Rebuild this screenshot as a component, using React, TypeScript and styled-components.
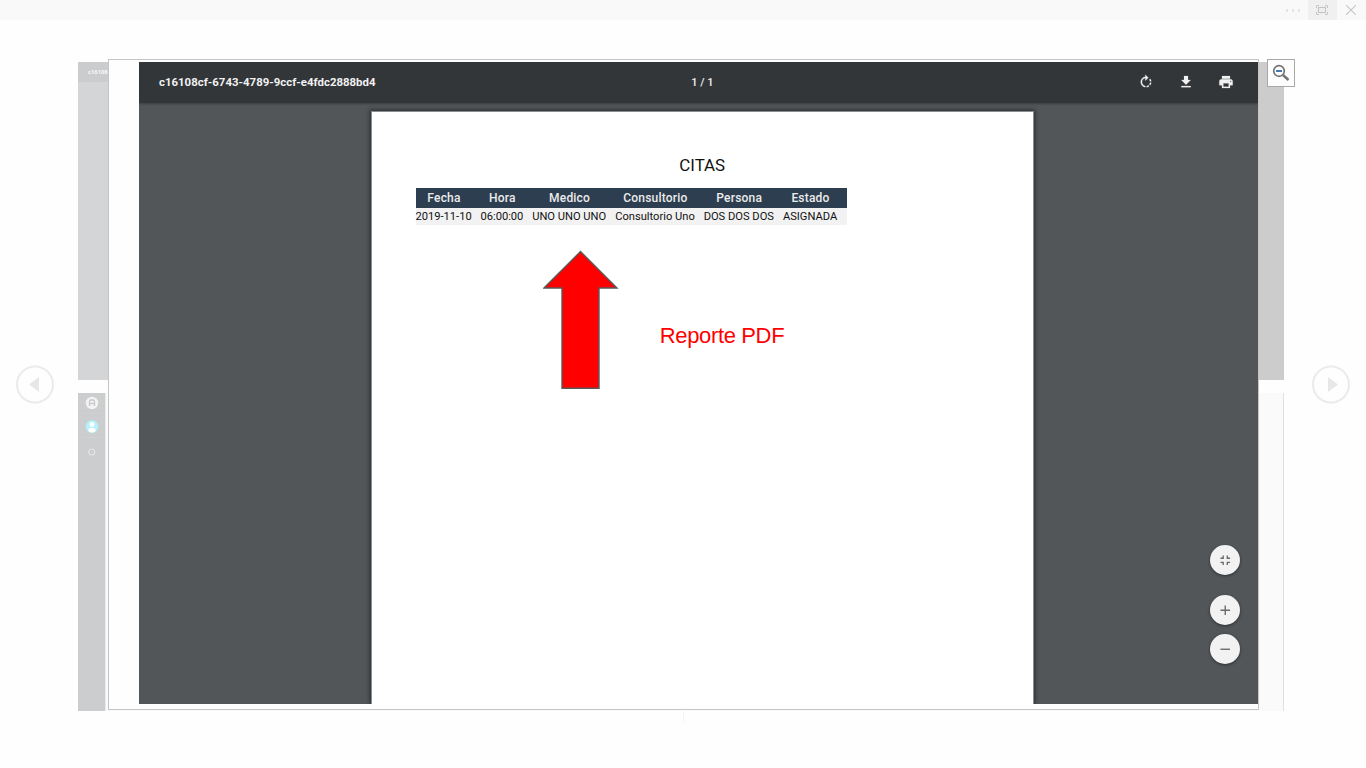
import React from 'react';
import styled, { createGlobalStyle } from 'styled-components';

const GlobalStyle = createGlobalStyle`
  * { box-sizing: border-box; }
  html, body { margin: 0; padding: 0; }
  body { background: #fefefe; overflow: hidden; font-family: Roboto, sans-serif; }
  svg { display: block; }
`;

const Viewer = styled.div`
  width: 1366px;
  height: 768px;
  display: flex;
  flex-direction: column;
  background: #fefefe;
`;

const WindowBar = styled.header`
  height: 20px;
  flex: none;
  display: flex;
  justify-content: flex-end;
  background: #f9f9f9;
`;

const WindowButton = styled.div<{ $active?: boolean }>`
  width: 29px;
  height: 20px;
  display: flex;
  align-items: center;
  justify-content: center;
  padding: 0 1px 0 0;
  background: ${(p) => (p.$active ? '#f0f0f0' : 'transparent')};
`;

const Stage = styled.main`
  flex: 1;
  display: flex;
  justify-content: space-between;
  padding: 0 16px;
`;

const NavButton = styled.button`
  width: 38px;
  height: 39px;
  margin-top: 345px;
  padding: 0;
  border: 0;
  background: none;
`;

const Book = styled.div`
  position: relative;
  width: 1206px;
  margin: 42px 4px 0 0;
  display: flex;
  flex-direction: column;
  gap: 13px;
`;

const FadedPage = styled.div`
  height: 318px;
  background: linear-gradient(90deg, #d4d5d7 0 50%, #cccccc 50%);
`;

const FadedToolbar = styled.div`
  width: 31px;
  height: 20px;
  padding-left: 10px;
  background: #cbccce;
  color: #fafafa;
  font: 700 5.8px/20px Roboto, sans-serif;
`;

const FadedApp = styled.div`
  height: 318px;
  display: flex;
  background: #fafafa;
  border-right: 1px solid #e0e0e0;
`;

const FadedSidebar = styled.div`
  width: 28px;
  padding: 3px 0 0 7px;
  display: flex;
  flex-direction: column;
  background: #cccdcf;
  border-right: 1px solid #e9e9ea;
`;

const FadedDivider = styled.div`
  width: 22px;
  height: 1px;
  margin: 3px 0 4px -3px;
  background: #cfd0d2;
`;

const Spine = styled.div`
  width: 1px;
  height: 12px;
  margin: -13px 0 0 605px;
  background: #f4f4f4;
`;

const ZoomedFrame = styled.section`
  position: absolute;
  left: 30px;
  top: -3px;
  width: 1151px;
  height: 651px;
  padding: 2px 0 5px 30px;
  border: 1px solid #c5c5c5;
  background: #fefefe;
`;

const ZoomOutButton = styled.button`
  position: absolute;
  left: 1189px;
  top: -3px;
  width: 28px;
  height: 28px;
  padding: 0;
  border: 1px solid #a8a8a8;
  background: #fdfdfd;
`;

const Pdf = styled.div`
  position: relative;
  width: 1119px;
  height: 642px;
  display: flex;
  flex-direction: column;
  background: #525659;
  overflow: hidden;
`;

const PdfToolbar = styled.div`
  flex: none;
  height: 41px;
  display: grid;
  grid-template-columns: 1fr auto 1fr;
  align-items: center;
  padding: 0 24px 2px 20px;
  background: #323639;
  color: #f1f1f1;
  font: 700 11.4px/38px Roboto, sans-serif;
  box-shadow: 0 1px 2px rgba(0, 0, 0, 0.3);
  z-index: 1;
`;

const PdfTitle = styled.span`
  letter-spacing: 0.02px;
`;

const PageCount = styled.span`
  padding: 2px 0 0 12px;
  font-weight: 500;
  font-size: 11px;
`;

const PdfActions = styled.div`
  display: flex;
  justify-content: flex-end;
  gap: 24px;
`;

const Sheet = styled.article`
  width: 663px;
  flex: 1;
  margin: 8px 0 0 232px;
  padding: 44px 0 0 43.5px;
  background: #fff;
  border: solid #8a8d8f;
  border-width: 1px 1px 0 1px;
  box-shadow: 0 0 4px 1px rgba(0, 0, 0, 0.5);
`;

const Title = styled.h1`
  margin: 0 44px 0 0;
  height: 32px;
  text-align: center;
  font: 400 16.9px/19px Roboto, sans-serif;
  color: #111;
`;

const Table = styled.div`
  width: 431px;
`;

const Row = styled.div<{ $head?: boolean }>`
  height: ${(p) => (p.$head ? '20px' : '17px')};
  display: grid;
  grid-template-columns: 56px 43px 74px 80px 70px 55px;
  column-gap: 8.8px;
  white-space: nowrap;
  background: ${(p) => (p.$head ? '#2c3e50' : '#f2f2f2')};
  color: ${(p) => (p.$head ? '#ececec' : '#111')};
  font-family: Roboto, sans-serif;
  font-size: ${(p) => (p.$head ? '12px' : '11.15px')};
  font-weight: ${(p) => (p.$head ? 500 : 400)};
  line-height: ${(p) => (p.$head ? '20px' : '17px')};
  letter-spacing: ${(p) => (p.$head ? '0.2px' : '0')};
  padding-left: ${(p) => (p.$head ? '0.5px' : '0.1px')};
`;

const Cell = styled.span`
  display: flex;
  justify-content: center;
`;

const Callout = styled.div`
  display: flex;
  padding: 25px 0 0 127px;
`;

const CalloutText = styled.p`
  margin: 72px 0 0 41.3px;
  color: #f00;
  font: 400 22px/28px "Liberation Sans", sans-serif;
  letter-spacing: -0.36px;
`;

const ZoomControls = styled.div`
  position: absolute;
  right: 18px;
  top: 483px;
  display: flex;
  flex-direction: column;
  gap: 8.4px;
`;

const RoundButton = styled.button<{ $spaced?: boolean }>`
  width: 30px;
  height: 30px;
  padding: 0;
  margin-bottom: ${(p) => (p.$spaced ? '12px' : '0')};
  display: flex;
  align-items: center;
  justify-content: center;
  border: 0;
  border-radius: 50%;
  background: #f2f2f2;
  box-shadow: 0 1px 3px rgba(0, 0, 0, 0.45);
`;

const columns = ['Fecha', 'Hora', 'Medico', 'Consultorio', 'Persona', 'Estado'];
const appointment = ['2019-11-10', '06:00:00', 'UNO UNO UNO', 'Consultorio Uno', 'DOS DOS DOS', 'ASIGNADA'];

const Arrow = ({ flip }: { flip?: boolean }) => (
  <svg width="38" height="39" viewBox="0 0 38 39">
    <circle cx="19" cy="19.500" r="18" fill="none" stroke="#ebebeb" strokeWidth="2" />
    <path d={flip ? 'M16 12v15l10-7.5z' : 'M23 12v15l-10-7.5z'} fill="#e7e7e7" />
  </svg>
);

const glyphs = {
  rotate: 'M15.55 5.55L11 1v3.07C7.06 4.56 4 7.92 4 12s3.05 7.44 7 7.93v-2.02c-2.84-.48-5-2.94-5-5.91s2.16-5.43 5-5.91V10l4.55-4.45zM19.93 11c-.17-1.39-.72-2.73-1.62-3.89l-1.42 1.42c.54.75.88 1.6 1.02 2.47h2.02zM13 17.9v2.02c1.39-.17 2.74-.71 3.9-1.61l-1.44-1.44c-.75.54-1.59.89-2.46 1.03zm3.89-2.42l1.42 1.41c.9-1.16 1.45-2.5 1.62-3.89h-2.02c-.14.87-.48 1.72-1.02 2.48z',
  download: 'M19 9h-4V3H9v6H5l7 7 7-7zM5 18v2h14v-2H5z',
  print: 'M19 8H5c-1.66 0-3 1.34-3 3v6h4v4h12v-4h4v-6c0-1.66-1.34-3-3-3zm-3 11H8v-5h8v5zm3-7c-.55 0-1-.45-1-1s.45-1 1-1 1 .45 1 1-.45 1-1 1zm-1-9H6v4h12V3z',
  fit: 'M5 16h3v3h2v-5H5v2zm3-8H5v2h5V5H8v3zm6 11h2v-3h3v-2h-5v5zm2-11V5h-2v5h5V8h-3z',
  plus: 'M19 13h-6v6h-2v-6H5v-2h6V5h2v6h6v2z',
  minus: 'M19 13H5v-2h14v2z',
};

const Glyph = ({ name, size = 16, color = '#f1f1f1' }: { name: keyof typeof glyphs; size?: number; color?: string }) => (
  <svg width={size} height={size} viewBox="0 0 24 24" fill={color} stroke={color} strokeWidth={size === 16 ? 0.3 : 0}>
    <path d={glyphs[name]} />
  </svg>
);

export default function App() {
  return (
    <Viewer>
      <GlobalStyle />
      <WindowBar>
        <WindowButton>
          <svg width="15" height="3" fill="#dcdcdc">
            <path d="M0 .5h2v2H0zM6 .5h2v2H6zM12 .5h2v2h-2z" />
          </svg>
        </WindowButton>
        <WindowButton $active>
          <svg width="12" height="10" viewBox="0 0 12 10" fill="none" stroke="#c6c6c6">
            <path d="M3 .5H.5V3M9 .5h2.500V3M.5 7v2.500H3M11.500 7v2.500H9" />
            <rect x="2.500" y="2.500" width="7" height="5" strokeWidth="1.200" />
          </svg>
        </WindowButton>
        <WindowButton>
          <svg width="10" height="10" fill="none" stroke="#c6c6c6" strokeWidth="1.1">
            <path d="M0 0l10 10M10 0L0 10" />
          </svg>
        </WindowButton>
      </WindowBar>
      <Stage>
        <NavButton aria-label="Anterior"><Arrow /></NavButton>
        <Book>
          <FadedPage>
            <FadedToolbar>c16108</FadedToolbar>
          </FadedPage>
          <FadedApp>
            <FadedSidebar>
              <svg width="14" height="14">
                <circle cx="7" cy="7" r="6.200" fill="#f3f3f3" />
                <path d="M4.500 10V5.500q0-1.500 1.500-1.500h2q1.500 0 1.500 1.500V10M4.500 7.500h5" fill="none" stroke="#c9c9cb" strokeWidth="1.3" />
              </svg>
              <FadedDivider />
              <svg width="14" height="14" style={{ marginTop: 2 }}>
                <circle cx="7" cy="6.500" r="6.300" fill="#b3f1fb" />
                <circle cx="7" cy="4.500" r="2.500" fill="#fff" />
                <path d="M3.200 11q0-3.300 3.800-3.300t3.800 3.300q-3.800 3-7.600 0z" fill="#fff" />
              </svg>
              <FadedDivider />
              <svg width="14" height="14" style={{ marginTop: 3 }}>
                <circle cx="6.700" cy="7" r="3" fill="none" stroke="#e5e5e6" strokeWidth="1.200" />
              </svg>
            </FadedSidebar>
          </FadedApp>
          <Spine />
          <ZoomedFrame>
            <Pdf>
              <PdfToolbar>
                <PdfTitle>c16108cf-6743-4789-9ccf-e4fdc2888bd4</PdfTitle>
                <PageCount>1 / 1</PageCount>
                <PdfActions>
                  <Glyph name="rotate" />
                  <Glyph name="download" />
                  <Glyph name="print" />
                </PdfActions>
              </PdfToolbar>
              <Sheet>
                <Title>CITAS</Title>
                <Table>
                  <Row $head>{columns.map((c) => <Cell key={c}>{c}</Cell>)}</Row>
                  <Row>{appointment.map((c) => <Cell key={c}>{c}</Cell>)}</Row>
                </Table>
                <Callout>
                  <svg width="76" height="140" viewBox="0 0 76 140">
                    <path d="M37.500 1.500L74 38H56V138.200H19V38H1z" fill="#f00" stroke="#595959" strokeWidth="1.400" />
                  </svg>
                  <CalloutText>Reporte PDF</CalloutText>
                </Callout>
              </Sheet>
              <ZoomControls>
                <RoundButton $spaced><Glyph name="fit" size={16.5} color="#6a6a6a" /></RoundButton>
                <RoundButton><Glyph name="plus" size={16.5} color="#6a6a6a" /></RoundButton>
                <RoundButton><Glyph name="minus" size={16.5} color="#6a6a6a" /></RoundButton>
              </ZoomControls>
            </Pdf>
          </ZoomedFrame>
          <ZoomOutButton aria-label="Alejar">
            <svg width="26" height="26" viewBox="0 0 26 26" fill="none">
              <circle cx="11" cy="11" r="5.300" stroke="#727272" strokeWidth="1.700" />
              <path d="M15 15l5.500 5" stroke="#727272" strokeWidth="2.400" />
              <path d="M8 11h6" stroke="#4379b3" strokeWidth="2" />
            </svg>
          </ZoomOutButton>
        </Book>
        <NavButton aria-label="Siguiente"><Arrow flip /></NavButton>
      </Stage>
    </Viewer>
  );
}
